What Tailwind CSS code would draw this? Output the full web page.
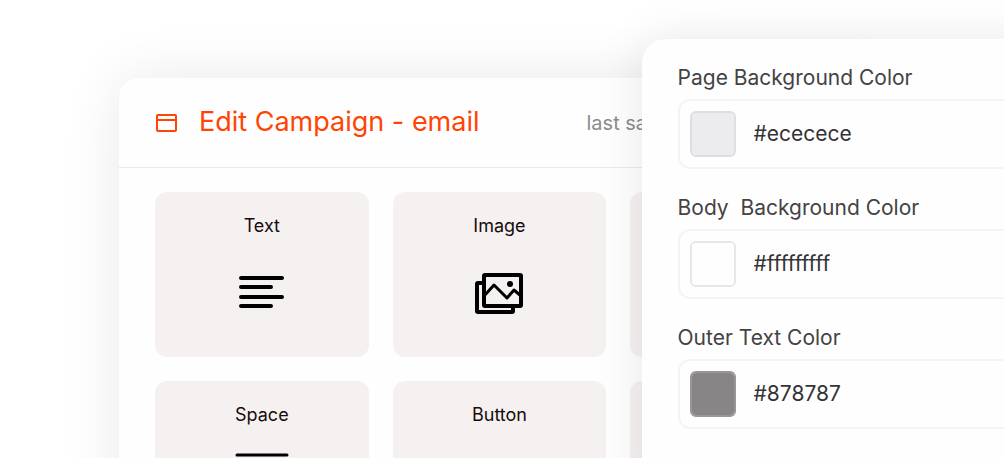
<!DOCTYPE html>
<html lang="en">
<head>
  <meta charset="utf-8">
  <meta name="viewport" content="width=device-width, initial-scale=1">
  <title>Edit Campaign</title>
  <script src="https://cdn.jsdelivr.net/npm/@tailwindcss/browser@4"></script>
</head>
<body class="relative h-screen overflow-hidden bg-white font-['Inter','Liberation_Sans',sans-serif]">
  <main class="ml-[119px] mt-[78px] w-[761px] max-w-full min-h-screen rounded-[20px] bg-[#fefefe] shadow-[0_0_60px_rgba(0,0,0,0.09)]">
    <header class="flex h-[90px] items-center border-b border-[#e8e8ee] px-9">
      <svg viewBox="0 0 24 20" fill="none" stroke="#ff4405" stroke-width="2" stroke-linejoin="round" class="w-6 h-5">
        <rect x="2" y="2" width="19" height="16" rx="1" />
        <path d="M2 7h19" />
      </svg>
      <h1 class="ml-5 text-[27px] text-[#ff4405]">Edit Campaign - email</h1>
      <p class="ml-[107px] text-[20px] text-[#8e8b8d]">last saved</p>
    </header>
    <div class="grid grid-cols-3 gap-6 px-9 py-6">
      <button type="button" class="flex h-[165px] flex-col items-center rounded-xl bg-[#f5f1f0] pt-5">
        <span class="text-[18px] leading-7 text-[#170b0c]">Text</span>
        <svg viewBox="0 0 54 48" stroke="#000" stroke-width="4" stroke-linecap="round" class="mt-7 h-12 w-[54px]">
          <path d="M6 10h41M6 19h30M6 29h41M6 38h30" />
        </svg>
      </button>
      <button type="button" class="flex h-[165px] flex-col items-center rounded-xl bg-[#f5f1f0] pt-5">
        <span class="text-[18px] leading-7 text-[#170b0c]">Image</span>
        <svg viewBox="0 0 54 48" fill="none" stroke="#000" stroke-width="4" stroke-linejoin="round" class="mt-7 h-12 w-[54px]">
          <rect x="12" y="7" width="37" height="31" rx="1" />
          <path d="M12 15H6a1 1 0 0 0-1 1v27a1 1 0 0 0 1 1h34a1 1 0 0 0 1-1v-5" />
          <path d="M12 28l10-11 13 13 7-8 7 6" stroke-width="3" />
          <circle cx="38" cy="16" r="3" fill="#000" stroke="none" />
        </svg>
      </button>
      <button type="button" aria-label="Divider" class="h-[165px] rounded-xl bg-[#f5f1f0]"></button>
      <button type="button" class="flex h-[165px] flex-col items-center rounded-xl bg-[#f5f1f0] pt-5">
        <span class="text-[18px] leading-7 text-[#170b0c]">Space</span>
        <svg viewBox="0 0 54 48" stroke="#000" stroke-width="3" stroke-linecap="round" class="mt-6 h-12 w-[54px]">
          <path d="M2 2h50M2 43h50" />
        </svg>
      </button>
      <button type="button" class="flex h-[165px] flex-col items-center rounded-xl bg-[#f5f1f0] pt-5">
        <span class="text-[18px] leading-7 text-[#170b0c]">Button</span>
      </button>
      <button type="button" aria-label="Social" class="h-[165px] rounded-xl bg-[#f5f1f0]"></button>
    </div>
  </main>

  <!-- settings drawer, runs past the right edge of the window -->
  <aside class="absolute -right-20 top-[39px] left-[calc(64%-1px)] min-h-screen rounded-[24px] bg-[#fefefe] px-9 pt-6 shadow-[0_0_50px_rgba(0,0,0,0.09)]">
    <form class="flex flex-col gap-6">
      <div>
        <label for="page_bg" class="block h-9 text-[21px] leading-[30px] text-[#444243]">Page Background Color</label>
        <div class="flex h-[70px] items-center gap-[18px] rounded-xl border-2 border-[#f4f3f8] px-[10px]">
          <input type="color" value="#ecebed" aria-label="Page background swatch" class="h-[46px] w-[46px] shrink-0 appearance-none rounded-md border-2 border-[#dfdde0] bg-[#ecebed] [&::-webkit-color-swatch-wrapper]:p-0 [&::-webkit-color-swatch]:border-0">
          <input id="page_bg" type="text" value="#ececece" class="w-full min-w-0 text-[21px] text-[#353334] focus:outline-none">
        </div>
      </div>
      <div>
        <label for="body_bg" class="block h-9 whitespace-pre text-[21px] leading-[30px] text-[#444243]">Body  Background Color</label>
        <div class="flex h-[70px] items-center gap-[18px] rounded-xl border-2 border-[#f4f3f8] px-[10px]">
          <input type="color" value="#fefefe" aria-label="Body background swatch" class="h-[46px] w-[46px] shrink-0 appearance-none rounded-md border-2 border-[#e8e6ea] bg-[#fefefe] [&::-webkit-color-swatch-wrapper]:p-0 [&::-webkit-color-swatch]:border-0">
          <input id="body_bg" type="text" value="#fffffffff" class="w-full min-w-0 text-[21px] text-[#353334] focus:outline-none">
        </div>
      </div>
      <div>
        <label for="outer_text" class="block h-9 text-[21px] leading-[30px] text-[#444243]">Outer Text Color</label>
        <div class="flex h-[70px] items-center gap-[18px] rounded-xl border-2 border-[#f4f3f8] px-[10px]">
          <input type="color" value="#888587" aria-label="Outer text swatch" class="h-[46px] w-[46px] shrink-0 appearance-none rounded-md border-2 border-[#99969a] bg-[#888587] [&::-webkit-color-swatch-wrapper]:p-0 [&::-webkit-color-swatch]:border-0">
          <input id="outer_text" type="text" value="#878787" class="w-full min-w-0 text-[21px] text-[#353334] focus:outline-none">
        </div>
      </div>
    </form>
  </aside>
</body>
</html>
